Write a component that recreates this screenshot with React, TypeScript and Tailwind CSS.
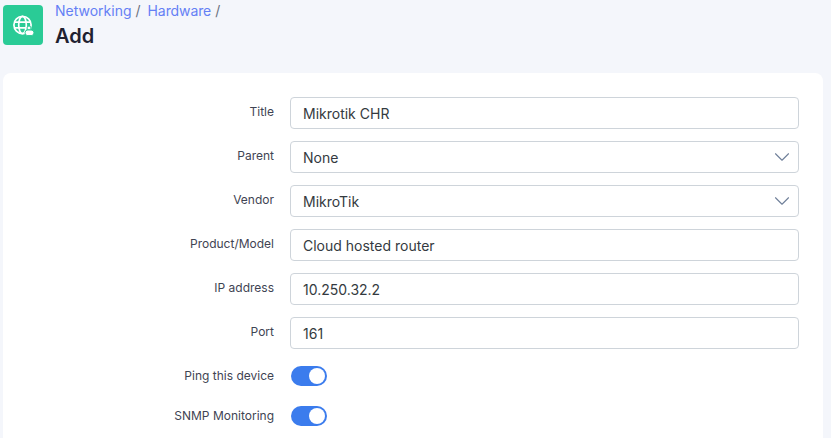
import { ChevronDown } from 'lucide-react';

const fields = [
  { label: 'Title', value: 'Mikrotik CHR' },
  { label: 'Parent', value: 'None', select: true },
  { label: 'Vendor', value: 'MikroTik', select: true },
  { label: 'Product/Model', value: 'Cloud hosted router' },
  { label: 'IP address', value: '10.250.32.2' },
  { label: 'Port', value: '161' },
];

const toggles = ['Ping this device', 'SNMP Monitoring'];

function GlobeIcon() {
  return (
    <svg width="24" height="24" viewBox="0 0 24 24" fill="none" stroke="white" strokeWidth="1.7">
      <circle cx="11.5" cy="12" r="8.6" />
      <ellipse cx="11.5" cy="12" rx="3.8" ry="8.6" />
      <path d="M3.2 9.2h16.6M3.2 14.8h16.6" />
      <circle cx="18" cy="15" r="2" fill="white" stroke="#2acb96" strokeWidth="1" />
      <rect x="14" y="17" width="9" height="5.6" rx="2.8" fill="white" stroke="#2acb96" strokeWidth="1" />
    </svg>
  );
}

export default function App() {
  return (
    <div className="h-[438px] w-[831px] overflow-hidden bg-[#f4f6fb] font-['Inter',sans-serif]">
      <div className="flex h-[73px] items-start pl-[3px] pt-[5px]">
        <div className="flex h-[40px] w-[40px] items-center justify-center rounded-[4px] bg-[#2acb96]">
          <GlobeIcon />
        </div>
        <div className="ml-[12px] -mt-[4px]">
          <div className="flex h-[20px] items-center text-[14px] leading-[20px]">
            <span className="text-[#6480f5]">Networking</span>
            <span className="ml-[4px] text-[#6b7280]">/</span>
            <span className="ml-[7px] tracking-[-0.1px] text-[#6480f5]">Hardware</span>
            <span className="ml-[4px] text-[#6b7280]">/</span>
          </div>
          <div className="mt-[3px] text-[20px] font-semibold leading-[24px] text-[#1f2130]">Add</div>
        </div>
      </div>

      <div className="ml-[3px] h-[400px] w-[820px] rounded-t-[8px] bg-white pt-[24px]">
        <div className="flex flex-col gap-[12px]">
          {fields.map((f) => (
            <div key={f.label} className="flex items-start">
              <div className="w-[271px] pt-[7px] text-right text-[12px] leading-[16px] text-[#3f4453]">{f.label}</div>
              <div className="ml-[16px] flex h-[32px] w-[509px] items-center justify-between rounded-[4px] border border-[#ced4da] pl-[12px] pr-[3px] text-[14px] text-[#343a40]">
                <span>{f.value}</span>
                {f.select && <ChevronDown className="h-[26px] w-[26px] text-[#6f7f99]" strokeWidth={1} />}
              </div>
            </div>
          ))}
        </div>
        <div className="mt-[17px] flex flex-col gap-[20px]">
          {toggles.map((t) => (
            <div key={t} className="flex items-center">
              <div className="w-[271px] text-right text-[12px] leading-[16px] text-[#3f4453]">{t}</div>
              <div className="ml-[17px] flex h-[20px] w-[36px] items-center justify-end rounded-full bg-[#3b7ced] pr-[2px]">
                <div className="h-[16px] w-[16px] rounded-full bg-white" />
              </div>
            </div>
          ))}
        </div>
      </div>
    </div>
  );
}
